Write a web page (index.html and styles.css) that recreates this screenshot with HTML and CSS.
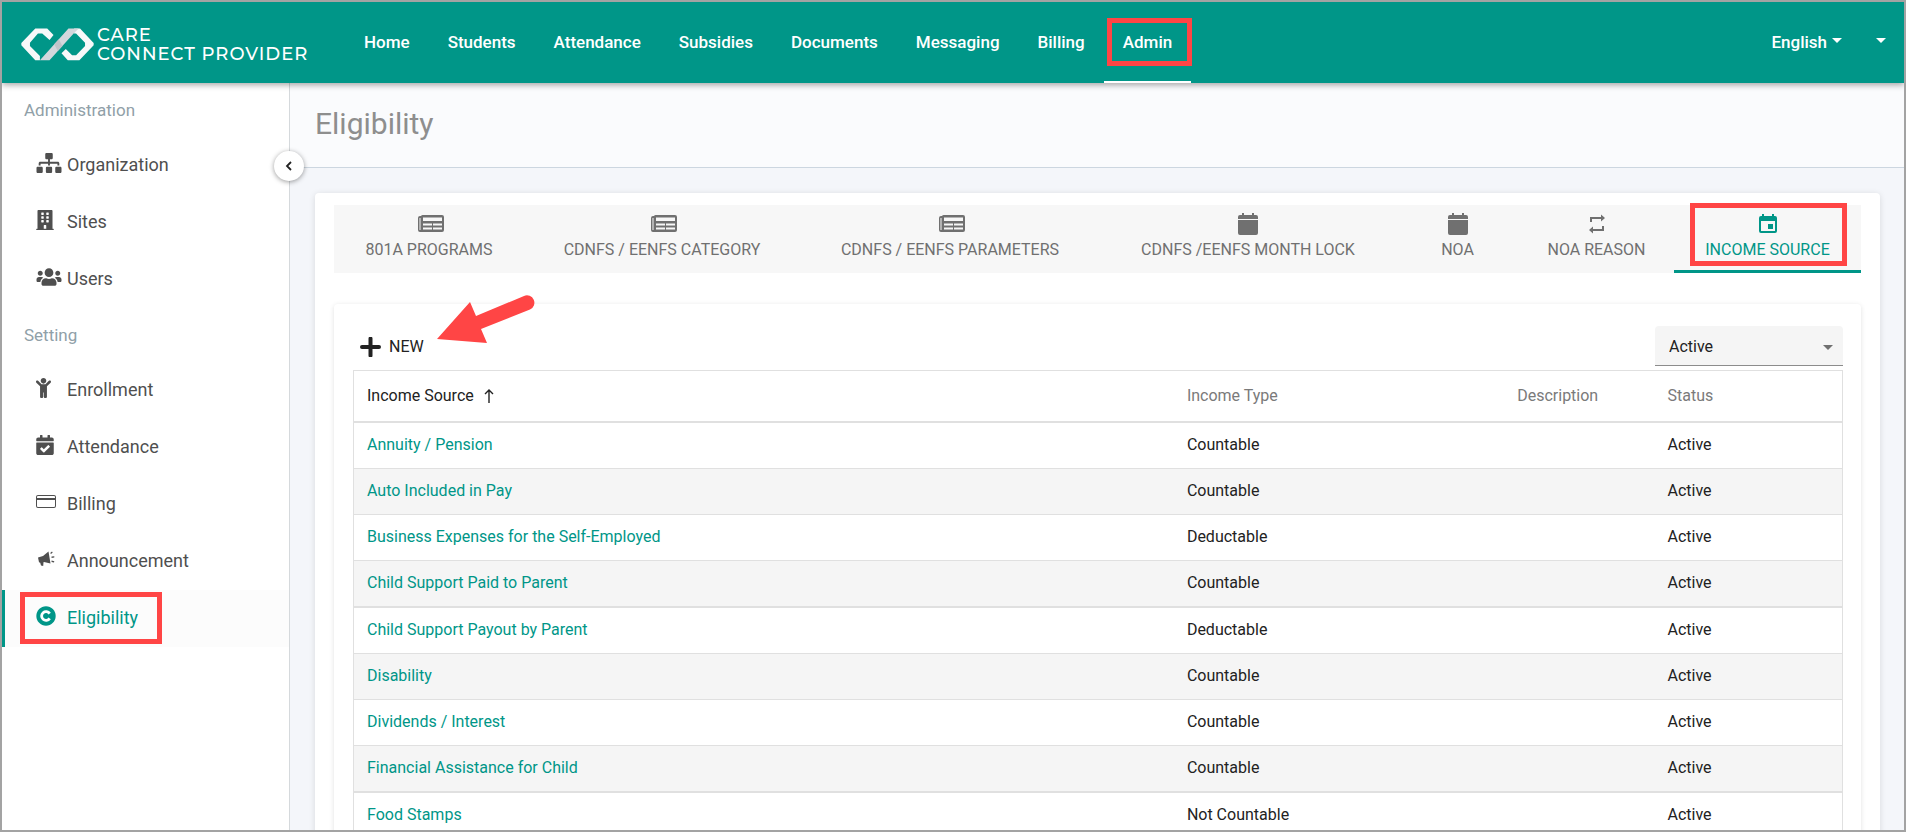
FILE: index.html
```html
<!DOCTYPE html>
<html lang="en">
<head>
<meta charset="utf-8">
<title>Eligibility - Care Connect Provider</title>
<link rel="stylesheet" href="styles.css">
</head>
<body>
<div class="app">
  <header class="topbar">
    <a class="brand" href="#">
      <svg class="brand-mark" viewBox="62 86 220 99" aria-hidden="true">
        <path fill="#f7f8f9" d="M105 87H141L160 107L148 122L126 102H113L89 130V140L119 170V183H105L63 138V131Z"/>
        <path fill="#f7f8f9" d="M240 87L281 131V138L238 183H203L184 162L197 149L216 168H228L255 140V130L228 102H222V87Z"/>
        <path fill="#d3d7dc" d="M119 183L205 87H236L222 101L148 183Z"/>
        <path fill="#bfc4c9" d="M162 135L176 120L187 140L173 155Z"/>
      </svg>
      <span class="brand-name">CARE<br>CONNECT PROVIDER</span>
    </a>
    <nav class="mainnav" aria-label="Main">
      <a href="#">Home</a>
      <a href="#">Students</a>
      <a href="#">Attendance</a>
      <a href="#">Subsidies</a>
      <a href="#">Documents</a>
      <a href="#">Messaging</a>
      <a href="#">Billing</a>
      <a href="#" class="current" aria-current="page">Admin<span class="mark mark-nav"></span></a>
    </nav>
    <div class="account">
      <button type="button">English<span class="caret"></span></button>
      <button type="button" aria-label="Account"><span class="caret"></span></button>
    </div>
  </header>

  <div class="shell">
    <aside class="sidebar">
      <h2>Administration</h2>
      <a href="#"><svg class="icon" width="26" height="20" viewBox="0 0 640 512" aria-hidden="true"><path d="M128 352H32c-17.700 0-32 14.300-32 32v96c0 17.700 14.300 32 32 32h96c17.700 0 32-14.300 32-32v-96c0-17.700-14.300-32-32-32zm-24-80h192v48h48v-48h192v48h48v-57.600c0-21.200-17.200-38.400-38.400-38.400H344v-64h40c17.700 0 32-14.300 32-32V32c0-17.700-14.300-32-32-32H256c-17.700 0-32 14.300-32 32v96c0 17.700 14.300 32 32 32h40v64H94.400C73.200 224 56 241.200 56 262.400V320h48v-48zm264 80h-96c-17.700 0-32 14.300-32 32v96c0 17.700 14.300 32 32 32h96c17.700 0 32-14.300 32-32v-96c0-17.700-14.300-32-32-32zm240 0h-96c-17.700 0-32 14.300-32 32v96c0 17.700 14.300 32 32 32h96c17.700 0 32-14.300 32-32v-96c0-17.700-14.300-32-32-32z"/></svg>Organization</a>
      <a href="#"><svg class="icon" width="18" height="20" viewBox="0 0 448 512" aria-hidden="true"><path d="M436 480h-20V24c0-13.300-10.700-24-24-24H56C42.700 0 32 10.700 32 24v456H12c-6.600 0-12 5.400-12 12v20h448v-20c0-6.600-5.400-12-12-12zM128 76c0-6.600 5.400-12 12-12h40c6.600 0 12 5.400 12 12v40c0 6.600-5.400 12-12 12h-40c-6.600 0-12-5.400-12-12V76zm0 96c0-6.600 5.400-12 12-12h40c6.600 0 12 5.400 12 12v40c0 6.600-5.400 12-12 12h-40c-6.600 0-12-5.400-12-12v-40zm52 148h-40c-6.600 0-12-5.400-12-12v-40c0-6.600 5.400-12 12-12h40c6.600 0 12 5.400 12 12v40c0 6.600-5.400 12-12 12zm76 160h-64v-84c0-6.600 5.400-12 12-12h40c6.600 0 12 5.400 12 12v84zm64-172c0 6.600-5.400 12-12 12h-40c-6.600 0-12-5.400-12-12v-40c0-6.600 5.400-12 12-12h40c6.600 0 12 5.400 12 12v40zm0-96c0 6.600-5.400 12-12 12h-40c-6.600 0-12-5.400-12-12v-40c0-6.600 5.400-12 12-12h40c6.600 0 12 5.400 12 12v40zm0-96c0 6.600-5.400 12-12 12h-40c-6.600 0-12-5.400-12-12V76c0-6.600 5.400-12 12-12h40c6.600 0 12 5.400 12 12v40z"/></svg>Sites</a>
      <a href="#"><svg class="icon" width="26" height="20" viewBox="0 0 640 512" aria-hidden="true"><path d="M96 224c35.300 0 64-28.700 64-64s-28.700-64-64-64-64 28.700-64 64 28.700 64 64 64zm448 0c35.300 0 64-28.700 64-64s-28.700-64-64-64-64 28.700-64 64 28.700 64 64 64zm32 32h-64c-17.600 0-33.500 7.100-45.100 18.600 40.300 22.100 68.900 62 75.100 109.400h66c17.700 0 32-14.300 32-32v-32c0-35.300-28.700-64-64-64zm-256 0c61.900 0 112-50.100 112-112S381.900 32 320 32 208 82.100 208 144s50.100 112 112 112zm76.800 32h-8.300c-20.800 10-43.900 16-68.500 16s-47.600-6-68.500-16h-8.300C179.600 288 128 339.600 128 403.200V432c0 26.500 21.500 48 48 48h288c26.500 0 48-21.500 48-48v-28.800c0-63.600-51.600-115.200-115.200-115.200zm-223.700-13.400C161.500 263.100 145.600 256 128 256H64c-35.300 0-64 28.700-64 64v32c0 17.700 14.300 32 32 32h65.900c6.300-47.400 34.900-87.300 75.200-109.400z"/></svg>Users</a>
      <h2>Setting</h2>
      <a href="#"><svg class="icon" width="15" height="20" viewBox="0 0 384 512" aria-hidden="true"><path d="M120 72c0-39.800 32.200-72 72-72s72 32.200 72 72c0 39.800-32.200 72-72 72s-72-32.200-72-72zm254.600 1.400c-12.500-12.500-32.800-12.500-45.300 0L242.700 160H141.300L54.600 73.400c-12.500-12.500-32.800-12.500-45.300 0-12.500 12.500-12.500 32.800 0 45.300L104 213.300V480c0 17.700 14.300 32 32 32h16c17.700 0 32-14.300 32-32V368h16v112c0 17.700 14.300 32 32 32h16c17.700 0 32-14.300 32-32V213.300l94.600-94.600c12.500-12.500 12.500-32.800 0-45.300z"/></svg>Enrollment</a>
      <a href="#"><svg class="icon" width="18" height="20" viewBox="0 0 448 512" aria-hidden="true"><path d="M436 160H12c-6.600 0-12-5.400-12-12v-36c0-26.500 21.500-48 48-48h48V12c0-6.600 5.400-12 12-12h40c6.600 0 12 5.400 12 12v52h128V12c0-6.600 5.400-12 12-12h40c6.600 0 12 5.400 12 12v52h48c26.500 0 48 21.500 48 48v36c0 6.600-5.400 12-12 12zM12 192h424c6.600 0 12 5.400 12 12v260c0 26.500-21.500 48-48 48H48c-26.500 0-48-21.500-48-48V204c0-6.600 5.400-12 12-12zm333.300 95.900l-28.200-28.400c-4.700-4.700-12.300-4.700-17-.1L194 364.200l-46-46.400c-4.700-4.700-12.300-4.700-17-.1l-28.400 28.200c-4.700 4.700-4.700 12.300-.1 17l82.600 83.300c4.700 4.700 12.300 4.700 17 .1l143.200-142c4.700-4.700 4.700-12.300 0-16.400z"/></svg>Attendance</a>
      <a href="#"><svg class="icon" width="20" height="16" viewBox="0 0 20 16" aria-hidden="true"><path fill-rule="evenodd" d="M2 1h16a2 2 0 0 1 2 2v9a2 2 0 0 1-2 2H2a2 2 0 0 1-2-2V3a2 2 0 0 1 2-2zM1 6v6a1 1 0 0 0 1 1h16a1 1 0 0 0 1-1V6zM1 3v1h18V3a1 1 0 0 0-1-1H2a1 1 0 0 0-1 1z"/></svg>Billing</a>
      <a href="#"><svg class="icon" width="20" height="18" viewBox="0 0 20 18" aria-hidden="true"><path d="M2 7.500L7 6L12.500 1.500L14.500 13.500L8 12L7.500 12.200L7.200 16L5 15.500L4.200 12.700L3 12.300ZM14.200 3L16 1.500L16.700 2.400L15 4ZM15.500 6.500L18.300 6.300V7.600L15.600 7.900ZM15.600 10.500L18.300 11.200L18 12.500L15.500 12Z"/></svg>Announcement</a>
      <a href="#" class="current" aria-current="page"><svg class="icon" width="20" height="20" viewBox="0 0 512 512" aria-hidden="true"><path fill-rule="evenodd" d="M256 8C119 8 8 119 8 256s111 248 248 248 248-111 248-248S393 8 256 8z"/><path d="M350 195A112 112 0 1 0 350 317" fill="none" stroke="#fff" stroke-width="72"/></svg>Eligibility<span class="mark mark-side"></span></a>
      <button type="button" class="collapse" aria-label="Collapse menu"><svg width="8" height="10" viewBox="0 0 8 10" aria-hidden="true"><path d="M6 1L2 5L6 9" fill="none" stroke="#222" stroke-width="1.800"/></svg></button>
    </aside>

    <main class="content">
      <h1>Eligibility</h1>
      <section class="card">
        <nav class="tabs" aria-label="Eligibility sections">
          <a href="#"><svg class="icon" viewBox="0 0 30 22" width="30" height="22"><use href="#i-list"/></svg>801A PROGRAMS</a>
          <a href="#"><svg class="icon" viewBox="0 0 30 22" width="30" height="22"><use href="#i-list"/></svg>CDNFS / EENFS CATEGORY</a>
          <a href="#"><svg class="icon" viewBox="0 0 30 22" width="30" height="22"><use href="#i-list"/></svg>CDNFS / EENFS PARAMETERS</a>
          <a href="#"><svg class="icon" viewBox="0 0 20 22" width="20" height="22"><use href="#i-cal"/></svg>CDNFS /EENFS MONTH LOCK</a>
          <a href="#"><svg class="icon" viewBox="0 0 20 22" width="20" height="22"><use href="#i-cal"/></svg>NOA</a>
          <a href="#"><svg class="icon" viewBox="0 0 18 22" width="18" height="22"><path d="M2 9V4H13V1.500L17 5L13 8.500V6H4V9ZM16 13V18H5V20.500L1 17L5 13.500V16H14V13Z"/></svg>NOA REASON</a>
          <a href="#" class="current" aria-current="page"><svg class="icon" viewBox="0 0 18 22" width="18" height="22"><path fill-rule="evenodd" d="M3 1H5V3H13V1H15V3H16A2 2 0 0 1 18 5V18A2 2 0 0 1 16 20H2A2 2 0 0 1 0 18V5A2 2 0 0 1 2 3H3ZM2 8V18H16V8ZM9 11H14V16H9Z"/></svg>INCOME SOURCE<span class="mark mark-tab"></span></a>
        </nav>

        <div class="panel">
          <div class="toolbar">
            <button type="button" class="new"><svg width="21" height="20" viewBox="0 0 21 20" aria-hidden="true"><path d="M10.500 1.500V18.500M2 10H19" stroke="#222" stroke-width="4" stroke-linecap="round"/></svg>NEW</button>
            <svg class="pointer" viewBox="0 0 98 50" width="98" height="50" aria-hidden="true"><path fill="#ff4545" d="M0 44L33 7L39 21L87 1A7 7 0 0 1 93 14.500L44 34L50 48Z"/></svg>
            <div class="select">
              <select aria-label="Status filter"><option>Active</option><option>Inactive</option></select>
              <span class="select-arrow"></span>
            </div>
          </div>
          <table>
            <colgroup><col class="c-source"><col class="c-type"><col class="c-desc"><col class="c-status"></colgroup>
            <thead><tr><th class="sorted" aria-sort="ascending">Income Source<svg class="sort" width="10" height="14" viewBox="0 0 10 14" aria-hidden="true"><path d="M5 14V1M1 5L5 1L9 5" fill="none" stroke="#222" stroke-width="1.400"/></svg></th><th>Income Type</th><th>Description</th><th>Status</th></tr></thead>
            <tbody>
              <tr><td><a href="#">Annuity / Pension</a></td><td>Countable</td><td></td><td>Active</td></tr>
              <tr><td><a href="#">Auto Included in Pay</a></td><td>Countable</td><td></td><td>Active</td></tr>
              <tr><td><a href="#">Business Expenses for the Self-Employed</a></td><td>Deductable</td><td></td><td>Active</td></tr>
              <tr><td><a href="#">Child Support Paid to Parent</a></td><td>Countable</td><td></td><td>Active</td></tr>
              <tr><td><a href="#">Child Support Payout by Parent</a></td><td>Deductable</td><td></td><td>Active</td></tr>
              <tr><td><a href="#">Disability</a></td><td>Countable</td><td></td><td>Active</td></tr>
              <tr><td><a href="#">Dividends / Interest</a></td><td>Countable</td><td></td><td>Active</td></tr>
              <tr><td><a href="#">Financial Assistance for Child</a></td><td>Countable</td><td></td><td>Active</td></tr>
              <tr><td><a href="#">Food Stamps</a></td><td>Not Countable</td><td></td><td>Active</td></tr>
            </tbody>
          </table>
        </div>
      </section>
    </main>
  </div>
</div>
<svg class="sprite" aria-hidden="true">
  <symbol id="i-list" viewBox="-4 0 30 22"><path fill-rule="evenodd" d="M5 2H24A2 2 0 0 1 26 4V17A2 2 0 0 1 24 19H2A2 2 0 0 1 0 17V5A2 2 0 0 1 2 3H3A2 2 0 0 1 5 2ZM1.500 5V17H2.500V5ZM5 4.500V8H24V4.500ZM5 10.500V12.500H14V10.500ZM15 10.500V12.500H24V10.500ZM5 14.500V16.500H14V14.500ZM15 14.500V16.500H24V14.500Z"/></symbol>
  <symbol id="i-cal" viewBox="0 0 20 22"><path d="M2 2H4V0H6V2H14V0H16V2H18A2 2 0 0 1 20 4V6H0V4A2 2 0 0 1 2 2ZM0 7H20V20A2 2 0 0 1 18 22H2A2 2 0 0 1 0 20Z"/></symbol>
</svg>
</body>
</html>
```
FILE: styles.css
```css
* { box-sizing: border-box; }

body {
  margin: 0;
  font: 16px/24px Roboto, "Liberation Sans", sans-serif;
  color: #222;
}

a { color: inherit; text-decoration: none; }
button, select { font: inherit; color: inherit; }
button { border: 0; padding: 0; background: none; cursor: pointer; }
h1, h2 { margin: 0; font-weight: 400; }
.icon { fill: currentColor; }
.sprite { position: absolute; width: 0; height: 0; }

.app {
  display: flex;
  flex-direction: column;
  height: 100vh;
  overflow: hidden;
  border: 2px solid #a3a3a3;
}

/* Top bar */
.topbar {
  position: relative;
  z-index: 2;
  flex: none;
  display: flex;
  height: 81px;
  font-size: 17px;
  color: #fff;
  background: #009688;
  box-shadow: 0 2px 6px rgba(0, 0, 0, .35);
}
.brand {
  display: flex;
  align-items: center;
  gap: 3px;
  width: 343px;
  padding: 4px 0 0 19px;
}
.brand-mark { width: 73px; height: 33px; }
.brand-name {
  padding-top: 1px;
  font: 500 18px/19px "Montserrat", Lato, sans-serif;
  letter-spacing: 1px;
  white-space: nowrap;
}
.mainnav { display: flex; font-weight: 500; }
.mainnav a {
  position: relative;
  padding: 28px 19px 0;
}
.mainnav .current { border-bottom: 2px solid #fff; }
.account {
  display: flex;
  align-items: flex-start;
  gap: 34px;
  margin-left: auto;
  padding: 28px 18px 0 0;
  font-weight: 500;
}
.account button { display: flex; align-items: center; height: 24px; gap: 5px; }
.caret {
  margin-bottom: 4px;
  border: 5px solid transparent;
  border-top-color: #fff;
  border-bottom: 0;
}

/* Highlight boxes */
.mark {
  position: absolute;
  border: 5px solid #ff4545;
  pointer-events: none;
}
.mark-nav { inset: 16px -1px 15px 3px; }
.mark-side { inset: 2px 127px 3px 18px; }
.mark-tab { inset: -2px 14px 4px 16px; }

.shell { flex: 1; display: flex; min-height: 0; }

/* Sidebar */
.sidebar {
  position: relative;
  z-index: 1;
  flex: none;
  width: 288px;
  border-right: 1px solid #d5d9dc;
  font-size: 18px;
  color: #4f4f4f;
  background: #fff;
}
.sidebar h2 {
  height: 54px;
  padding: 15px 22px 0;
  font-size: 17px;
  color: #90a0a8;
}
.sidebar a {
  position: relative;
  display: grid;
  grid-template-columns: 31px 1fr;
  align-items: center;
  height: 57px;
  padding: 0 0 1px 34px;
}
.sidebar a .icon { margin-bottom: 4px; }
.sidebar .current {
  color: #009688;
  background: #fcfcfc;
  box-shadow: inset 3px 0 #009688;
}
.collapse {
  position: absolute;
  top: 68px;
  right: -15px;
  display: grid;
  place-items: center;
  width: 30px;
  height: 30px;
  border-radius: 50%;
  background: #fff;
  box-shadow: 0 1px 5px rgba(0, 0, 0, .4);
}

/* Content */
.content {
  flex: 1;
  min-width: 0;
  overflow: hidden;
  background: #f4f6fa;
}
h1 {
  height: 85px;
  padding: 21px 25px 0;
  border-bottom: 1px solid #ccd6e0;
  font-size: 30px;
  line-height: 40px;
  color: #8e8e8e;
  background: #fafbfd;
}
.card {
  margin: 25px 24px 25px 25px;
  padding: 12px 19px 19px;
  border-radius: 4px;
  background: #fff;
  box-shadow: 0 1px 6px rgba(0, 0, 0, .12);
}
.tabs {
  display: grid;
  grid-template-columns: 190fr 276fr 300fr 296fr 123fr 155fr 187fr;
  height: 68px;
  color: #707070;
  background: #f7f7f7;
}
.tabs a {
  position: relative;
  display: flex;
  flex-direction: column;
  align-items: center;
  padding-top: 8px;
  gap: 3px;
  white-space: nowrap;
}
.tabs .current { color: #009688; border-bottom: 3px solid #009688; }

.panel {
  margin-top: 31px;
  padding: 22px 18px 18px 19px;
  border-radius: 4px;
  box-shadow: 0 1px 5px rgba(0, 0, 0, .12);
}
.toolbar {
  position: relative;
  display: flex;
  justify-content: space-between;
  margin-bottom: 4px;
}
.new { display: flex; align-items: center; gap: 8px; padding: 1px 0 0 7px; }
.pointer { position: absolute; left: 84px; top: -31px; }
.select { position: relative; width: 188px; }
.select select {
  appearance: none;
  width: 100%;
  height: 40px;
  padding: 2px 14px 0;
  border: 0;
  border-bottom: 1px solid #8c8c8c;
  border-radius: 4px 4px 0 0;
  background: #f5f5f5;
}
.select-arrow {
  position: absolute;
  top: 19px;
  right: 10px;
  border: 5px solid transparent;
  border-top-color: #707070;
  border-bottom: 0;
  pointer-events: none;
}

/* Table */
table {
  width: 100%;
  table-layout: fixed;
  border: 1px solid #e0e0e0;
  border-spacing: 0;
}
.c-source { width: 55.1%; }
.c-type { width: 22.2%; }
.c-desc { width: 10.1%; }
th, td {
  padding: 0 13px;
  text-align: left;
  font-weight: 400;
  border-bottom: 1px solid #e0e0e0;
}
th { height: 52px; color: #7a7a7a; border-bottom-width: 2px; }
th.sorted { color: #222; }
td { height: 46px; padding-bottom: 2px; }
td a { color: #009688; }
tr:nth-child(even) td { background: #f5f5f5; }
tr:nth-child(4n) td { height: 47px; border-bottom-width: 2px; }
.sort { margin-left: 10px; vertical-align: -2px; }
```
